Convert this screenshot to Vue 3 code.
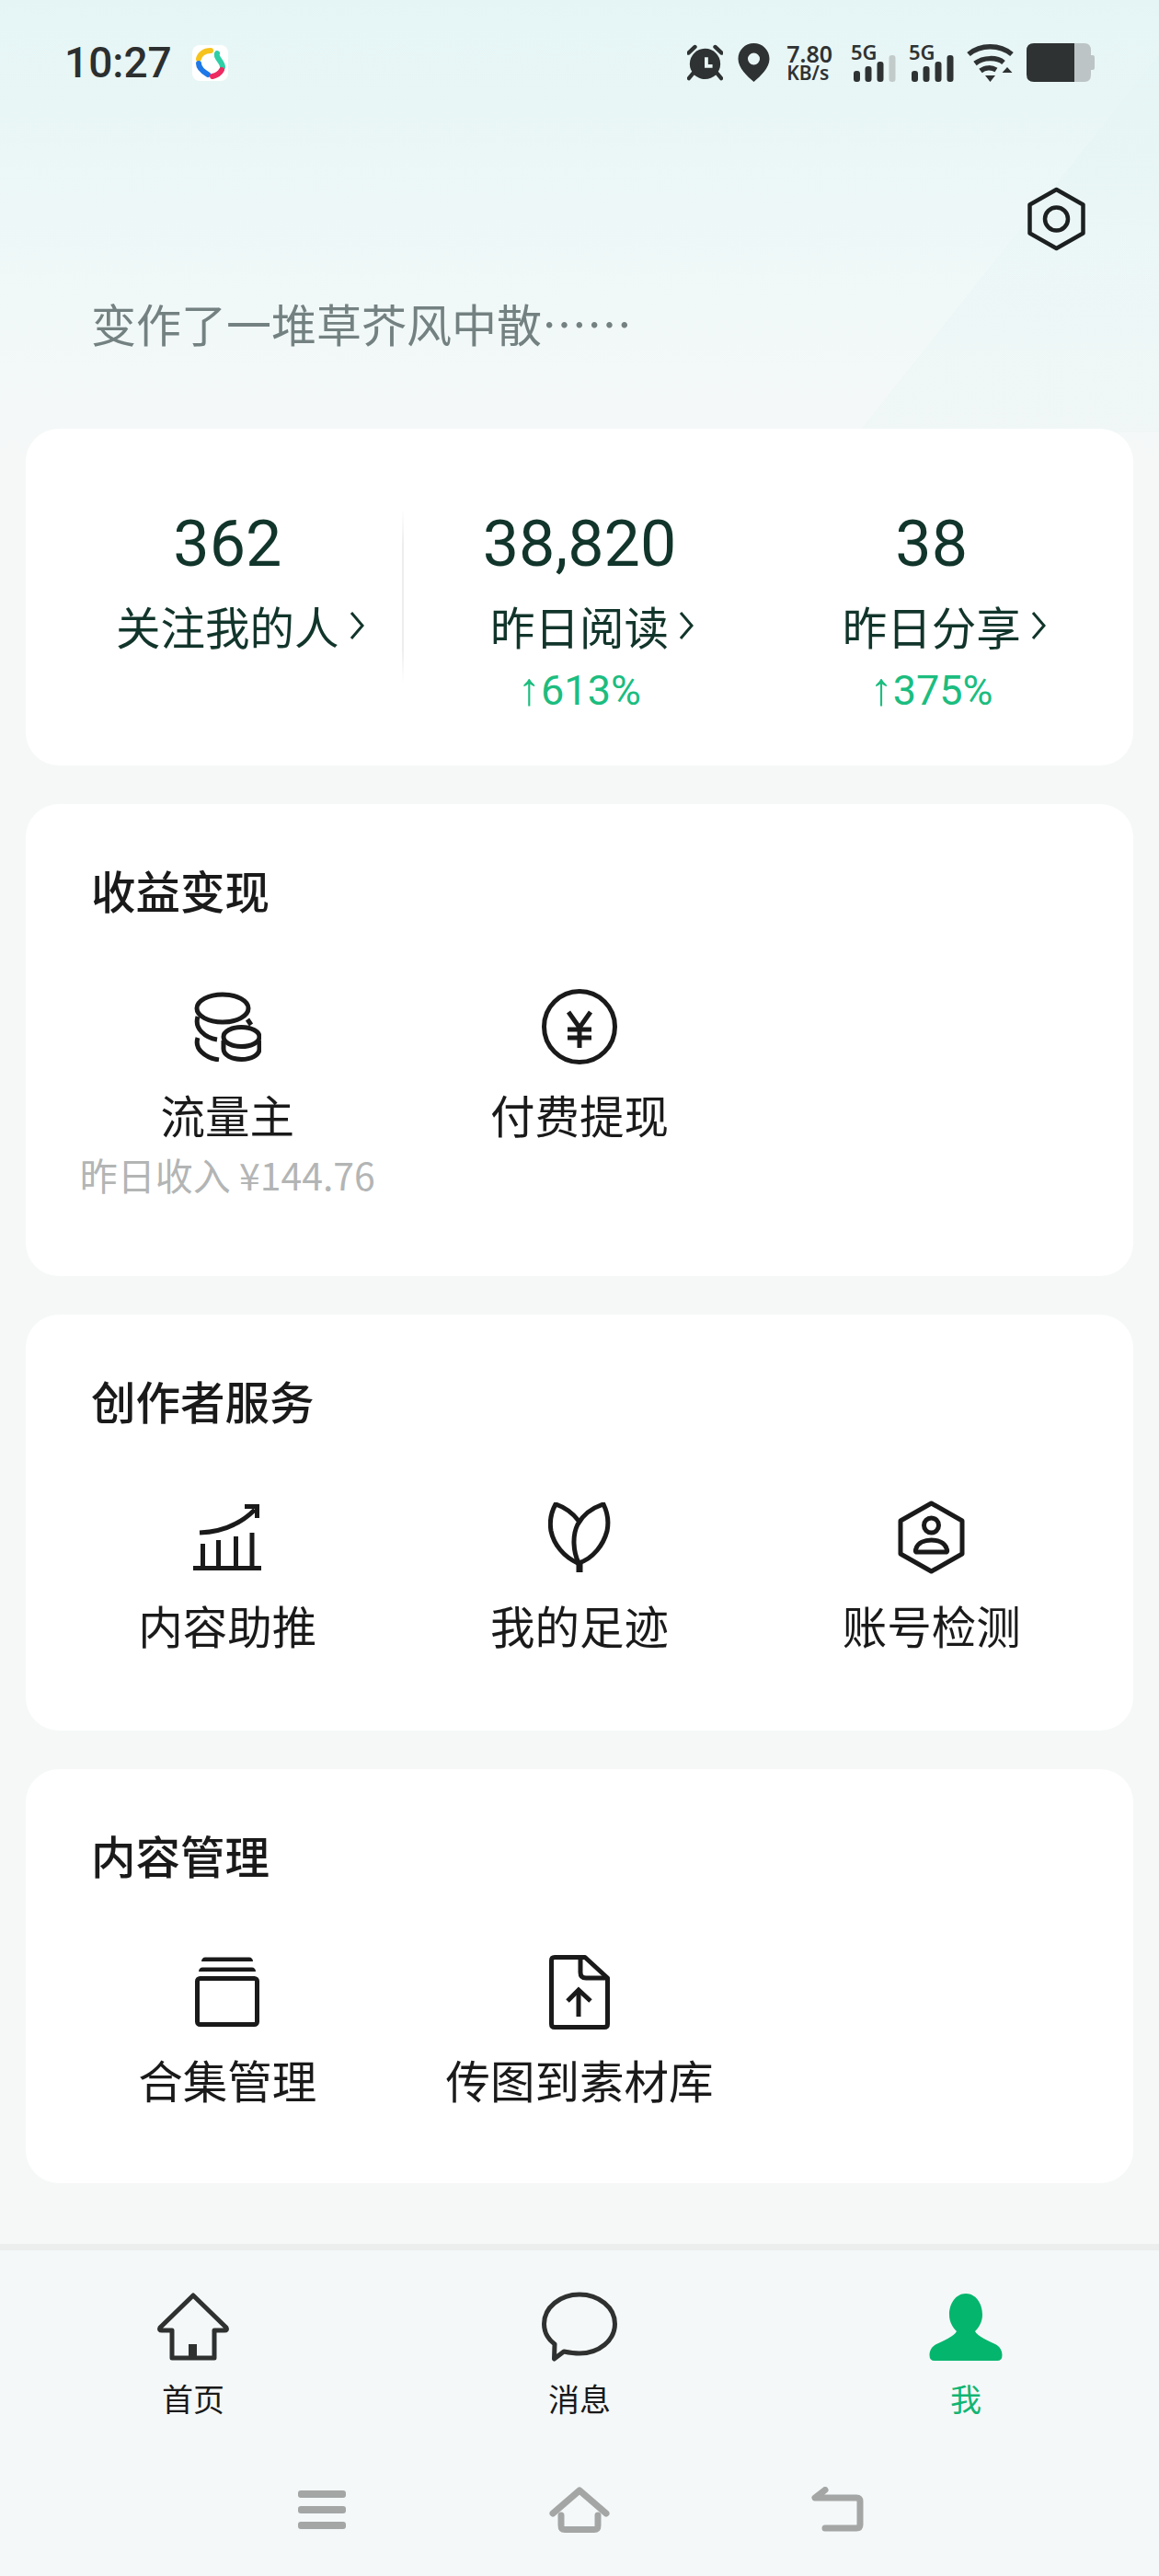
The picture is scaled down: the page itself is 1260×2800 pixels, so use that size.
<template>
  <div class="page">
    <div class="status">
      <div class="status-left">
        <span class="time">10:27</span>
        <svg class="app-logo" width="39" height="39" viewBox="0 0 39 39">
          <rect width="39" height="39" rx="8" fill="#fff" />
          <g fill="none" stroke-width="6" stroke-linecap="round">
            <path d="M20 6 C13 6 8 10 7 15" stroke="#f6c21c" />
            <path d="M27 9 C25 14 33 18 33 24" stroke="#2ecfa6" />
            <path d="M7 20 C7 25 12 29 17 32" stroke="#1e78e8" />
            <path d="M32 27 C30 31 26 33 22 34" stroke="#ee2a62" />
          </g>
        </svg>
      </div>
      <div class="status-right">
        <svg width="39" height="41" viewBox="0 0 41 41">
          <circle cx="20.500" cy="21.500" r="17.500" fill="#2f3232" />
          <path d="M22 14 V24 H29" fill="none" stroke="#eaf6f6" stroke-width="4" />
          <path d="M1.500 9 L9 2 M39.500 9 L32 2 M7 32 L2 38 M34 32 L39 38" stroke="#2f3232" stroke-width="4.500" stroke-linecap="round" />
        </svg>
        <svg class="pin" width="35" height="42" viewBox="0 0 34 42">
          <path fill="#2f3232" fill-rule="evenodd" d="M17 0 C26.500 0 34 7.500 34 17 C34 27 24 36 17 42 C10 36 0 27 0 17 C0 7.500 7.500 0 17 0 Z M17 10.500 A6.500 6.500 0 1 0 17 23.500 A6.500 6.500 0 1 0 17 10.500 Z" />
        </svg>
        <div class="speed">
          <span class="speed-num">7.80</span>
          <span class="speed-unit">KB/s</span>
        </div>
        <div class="signal">
          <span class="signal-tag">5G</span>
          <svg width="49" height="42" viewBox="0 0 49 42">
            <rect x="3" y="30" width="7" height="12" rx="3" fill="#2f3232" />
            <rect x="15.500" y="25" width="7" height="17" rx="3" fill="#2f3232" />
            <rect x="28.500" y="20" width="7" height="22" rx="3" fill="#2f3232" />
            <rect x="41.500" y="13" width="7" height="29" rx="3" fill="#c3caca" />
          </svg>
        </div>
        <div class="signal">
          <span class="signal-tag">5G</span>
          <svg width="49" height="42" viewBox="0 0 49 42">
            <rect x="3" y="30" width="7" height="12" rx="3" fill="#2f3232" />
            <rect x="15.500" y="25" width="7" height="17" rx="3" fill="#2f3232" />
            <rect x="28.500" y="20" width="7" height="22" rx="3" fill="#2f3232" />
            <rect x="41.500" y="13" width="7" height="29" rx="3" fill="#2f3232" />
          </svg>
        </div>
        <svg width="51" height="42" viewBox="0 0 51 42">
          <g fill="none" stroke="#2f3232" stroke-width="5.500">
            <path d="M2 12 C15 1 36 1 49 12" />
            <path d="M9 22 C18 15 33 15 40 21" />
            <path d="M15 30 C20 26 27 26 32 29" />
          </g>
          <path d="M20 35 H31 L25.500 42 Z M44 26 L49.500 32 H38.500 Z" fill="#2f3232" />
        </svg>
        <svg class="battery" width="74" height="42" viewBox="0 0 74 42">
          <path d="M52 0 H8 Q0 0 0 8 V34 Q0 42 8 42 H52 Z" fill="#2f3232" />
          <path d="M52 0 H63 Q70 0 70 8 V34 Q70 42 63 42 H52 Z M70 13 H72 Q74 13 74 15 V27 Q74 29 72 29 H70 Z" fill="#bdc4c5" />
        </svg>
      </div>
    </div>

    <div class="top-action">
      <svg width="63" height="70" viewBox="0 0 63 70">
        <path d="M31.500 3 L60.500 19.500 V50.500 L31.500 67 L2.500 50.500 V19.500 Z" fill="none" stroke="#1c2020" stroke-width="4.500" stroke-linejoin="round" />
        <circle cx="31.500" cy="35" r="12.500" fill="none" stroke="#1c2020" stroke-width="4.500" />
      </svg>
    </div>

    <p class="motto">变作了一堆草芥风中散……</p>

    <section class="card stats">
      <div v-for="(s, i) in stats" :key="s.label" class="stat" :class="{ first: i === 0 }">
        <div class="stat-num">{{ s.num }}</div>
        <div class="stat-label">
          {{ s.label }}
          <svg class="chev" width="18" height="34" viewBox="0 0 18 34">
            <path d="M3 3 L15 17 L3 31" fill="none" stroke="#12352b" stroke-width="3" />
          </svg>
        </div>
        <div v-if="s.rate" class="stat-rate"><span class="arrow">↑</span>{{ s.rate }}</div>
      </div>
    </section>

    <section class="card group income">
      <h2>收益变现</h2>
      <div class="items">
        <div class="item">
          <div class="ico">
            <svg width="73" height="76" viewBox="0 0 73 76" fill="none" stroke="#1a1a1a" stroke-width="5">
              <ellipse cx="31" cy="18" rx="28" ry="15" />
              <path d="M58 30 L62 36" />
              <path d="M4 27 C0 40 12 50 25 52" />
              <path d="M4 50 C0 62 12 72 27 74" />
              <ellipse cx="51.500" cy="49" rx="19.500" ry="10.500" />
              <path d="M32 53 V62 C32 69 41 73.500 51.500 73.500 C62 73.500 71 69 71 62 V53" />
            </svg>
          </div>
          <div class="name">流量主</div>
          <div class="sub">昨日收入 ¥144.76</div>
        </div>
        <div class="item">
          <div class="ico">
            <svg width="82" height="82" viewBox="0 0 82 82" fill="none" stroke="#1a1a1a">
              <circle cx="41" cy="41" r="38.500" stroke-width="5" />
              <path d="M29 25 L41 42 L53 25 M28 44 H54 M28 53 H54 M41 42 V64" stroke-width="5" />
            </svg>
          </div>
          <div class="name">付费提现</div>
        </div>
      </div>
    </section>

    <section class="card group">
      <h2>创作者服务</h2>
      <div class="items">
        <div class="item">
          <div class="ico">
            <svg width="74" height="72" viewBox="0 0 74 72" fill="none" stroke="#1a1a1a" stroke-width="5">
              <path d="M0 69.500 H74" />
              <path d="M10.500 43 V68 M27.500 39 V68 M46.500 35 V68 M64 31 V68" />
              <path d="M7 31 C31 30 51 22 67 6" />
              <path d="M56 2.500 H69.500 V15" />
            </svg>
          </div>
          <div class="name">内容助推</div>
        </div>
        <div class="item">
          <div class="ico">
            <svg width="68" height="76" viewBox="0 0 68 76" fill="none" stroke="#1a1a1a" stroke-width="5">
              <path d="M33 20 C26 11 17 5 8 2 C3 11 1.500 22 3 31 C6 46 17 59 32 66" />
              <path d="M60 2 C48 6 38 13 32 24 C26 36 27 53 33 66 C49 61 60 46 64 31 C66 21 64 10 60 2 Z" />
              <path d="M34 65 V76" stroke-width="7" />
            </svg>
          </div>
          <div class="name">我的足迹</div>
        </div>
        <div class="item">
          <div class="ico">
            <svg width="73" height="80" viewBox="0 0 73 80" fill="none" stroke="#1a1a1a" stroke-width="5" stroke-linejoin="round">
              <path d="M36.500 3 L70 22 V58 L36.500 77 L3 58 V22 Z" />
              <circle cx="36.500" cy="27" r="8" />
              <path d="M21 56 C19 56 19 54 20 52 C22 46 29 43 36.500 43 C44 43 51 46 53 52 C54 54 54 56 52 56 Z" />
            </svg>
          </div>
          <div class="name">账号检测</div>
        </div>
      </div>
    </section>

    <section class="card group last">
      <h2>内容管理</h2>
      <div class="items">
        <div class="item">
          <div class="ico">
            <svg width="70" height="76" viewBox="0 0 70 76" fill="none" stroke="#1a1a1a">
              <path d="M7 5 C7 2 9 .5 11 .5 H59 C61 .5 63 2 63 5 Z" fill="#1a1a1a" stroke="none" />
              <path d="M4 16 C4 13 6 11.500 8 11.500 H62 C64 11.500 66 13 66 16 Z" fill="#1a1a1a" stroke="none" />
              <rect x="2.500" y="23.500" width="65" height="50" rx="3" stroke-width="5" />
            </svg>
          </div>
          <div class="name">合集管理</div>
        </div>
        <div class="item">
          <div class="ico">
            <svg width="66" height="81" viewBox="0 0 66 81" fill="none" stroke="#1a1a1a" stroke-width="5" stroke-linejoin="round">
              <path d="M6 2.500 H39 L63.500 25 V75 Q63.500 78.500 60 78.500 H6 Q2.500 78.500 2.500 75 V6 Q2.500 2.500 6 2.500 Z" />
              <path d="M34 3 V19 Q34 25 40 25 H63" />
              <path d="M32 38 V67" />
              <path d="M20 50 L32 38 L45 50" stroke-linejoin="miter" />
            </svg>
          </div>
          <div class="name">传图到素材库</div>
        </div>
      </div>
    </section>

    <footer class="bottom">
      <nav class="tabs">
        <div class="tab">
          <svg width="78" height="74" viewBox="0 0 78 74" fill="none" stroke="#2f3131" stroke-width="5" stroke-linejoin="round">
            <path d="M39 3 L3 38 Q1.500 41 5 41 H16 V71 H62 V41 H73 Q76.500 41 75 38 Z" />
            <path d="M34 56 H43 V71 H34 Z" fill="#2f3131" stroke="none" />
          </svg>
          <span>首页</span>
        </div>
        <div class="tab">
          <svg width="82" height="76" viewBox="0 0 82 76" fill="none" stroke="#2f3131" stroke-width="5" stroke-linejoin="round">
            <path d="M14 57 C6 51 2.500 43 2.500 35 C2.500 17 20 3 41 3 C62 3 79.500 17 79.500 35 C79.500 53 62 67 41 67 C35 67 29 66 24 65 L13.500 73 Z" />
          </svg>
          <span>消息</span>
        </div>
        <div class="tab active">
          <svg width="80" height="76" viewBox="0 0 80 76">
            <path fill="#04b56d" d="M40 2 C51 2 58 13 58 25 C58 33 54 39 50 43 C52 48 62 52 72 57 C77 59.500 79.500 64 79.500 69 Q79.500 75 74 75 H6 Q.5 75 .5 69 C.5 64 3 59.500 8 57 C18 52 28 48 30 43 C26 39 22 33 22 25 C22 13 29 2 40 2 Z" />
          </svg>
          <span>我</span>
        </div>
      </nav>
      <div class="sys-nav">
        <svg width="52" height="42" viewBox="0 0 52 42">
          <rect width="52" height="8" rx="3" fill="#a4a6a6" />
          <rect y="17" width="52" height="8" rx="3" fill="#a4a6a6" />
          <rect y="34" width="52" height="8" rx="3" fill="#a4a6a6" />
        </svg>
        <svg width="66" height="50" viewBox="0 0 66 50" fill="none" stroke="#a4a6a6" stroke-width="7" stroke-linecap="round" stroke-linejoin="round">
          <path d="M4 29 L33 4 L62 29" />
          <path d="M13 31 V42 Q13 46.500 17 46.500 H49 Q53 46.500 53 42 V31" />
        </svg>
        <svg width="57" height="50" viewBox="0 0 57 50" fill="none" stroke="#a4a6a6" stroke-width="7" stroke-linecap="round" stroke-linejoin="round">
          <path d="M15 3.500 L4 12 H49 Q53 12 53 16 V41 Q53 45 49 45 H15" />
        </svg>
      </div>
    </footer>
  </div>
</template>

<script setup>
const stats = [
  { num: '362', label: '关注我的人' },
  { num: '38,820', label: '昨日阅读', rate: '613%' },
  { num: '38', label: '昨日分享', rate: '375%' },
]
</script>

<style>
html,
body {
  margin: 0;
  background: #f6f8f8;
}
</style>

<style scoped>
.page {
  width: 1260px;
  height: 2800px;
  display: flex;
  flex-direction: column;
  overflow: hidden;
  font-family: "Noto Sans CJK SC", "Noto Sans", sans-serif;
  background:
    linear-gradient(128.5deg, rgba(255, 255, 255, 0) 80%, rgba(222, 241, 241, 0.2) 80%) 0 0 / 1260px 470px no-repeat,
    linear-gradient(180deg, #e5f5f5 0, #f1f8f8 340px, #f6f8f8 500px);
}
.status {
  display: flex;
  justify-content: space-between;
  align-items: center;
  height: 42px;
  margin-top: 47px;
  padding: 0 70px;
}
.status-left {
  display: flex;
  align-items: center;
  gap: 22px;
}
.time {
  font-family: Roboto, sans-serif;
  font-size: 46px;
  font-weight: 500;
  line-height: 42px;
  color: #2c2f2f;
}
.status-right {
  display: flex;
  align-items: center;
  gap: 14px;
  color: #2f3232;
}
.pin {
  margin-left: 2px;
}
.speed {
  display: flex;
  flex-direction: column;
  margin: 0 6px 0 4px;
  font-family: "Noto Sans", sans-serif;
  font-weight: 600;
}
.speed-num {
  font-size: 25px;
  line-height: 23px;
}
.speed-unit {
  font-size: 21px;
  line-height: 19px;
}
.signal {
  position: relative;
  width: 49px;
  height: 42px;
}
.signal svg {
  display: block;
}
.signal-tag {
  position: absolute;
  left: 0;
  top: -2px;
  font-family: "Noto Sans", sans-serif;
  font-size: 22px;
  font-weight: 600;
  line-height: 22px;
}
.top-action {
  display: flex;
  justify-content: flex-end;
  margin-top: 114px;
  padding-right: 80px;
}
.motto {
  margin: 46px 0 0 99px;
  font-size: 49px;
  line-height: 64px;
  color: #748181;
}
.card {
  margin: 0 28px;
  border-radius: 36px;
  background: #fff;
}
.stats {
  display: grid;
  grid-template-columns: repeat(3, 1fr);
  margin-top: 83px;
  padding: 88px 28px 53px;
}
.stat {
  position: relative;
  text-align: center;
  color: #12352b;
}
.stat.first::after {
  content: "";
  position: absolute;
  top: -1px;
  right: 0;
  width: 2px;
  height: 190px;
  background: linear-gradient(180deg, #fff, #eceeee 20%, #eceeee 80%, #fff);
}
.stat-num {
  font-family: Roboto, sans-serif;
  font-size: 70px;
  line-height: 74px;
}
.stat-label {
  position: relative;
  width: max-content;
  margin: 20px auto 0;
  font-size: 48.500px;
  line-height: 64px;
}
.chev {
  position: absolute;
  left: 100%;
  top: 15px;
  margin-left: 10px;
}
.stat-rate {
  margin-top: 11px;
  font-family: Roboto, sans-serif;
  font-size: 45px;
  line-height: 56px;
  color: #1cbd7f;
}
.arrow {
  font-family: "Liberation Sans", sans-serif;
  font-size: 50px;
  line-height: 0;
}
.group {
  margin-top: 42px;
  padding: 61px 28px 83px;
}
.income {
  padding-bottom: 86px;
}
.last {
  padding-bottom: 81px;
}
.group h2 {
  margin: 0 0 0 43px;
  font-size: 48.500px;
  font-weight: 500;
  line-height: 64px;
  color: #1a1a1a;
}
.items {
  display: grid;
  grid-template-columns: repeat(3, 1fr);
  margin-top: 77px;
}
.item {
  display: flex;
  flex-direction: column;
  align-items: center;
}
.ico {
  display: flex;
  align-items: center;
  justify-content: center;
  height: 80px;
}
.name {
  margin-top: 23px;
  font-size: 48.500px;
  line-height: 64px;
  color: #1a1a1a;
}
.sub {
  margin-top: 8px;
  font-size: 41px;
  line-height: 50px;
  color: #b3b5b5;
  white-space: nowrap;
}
.bottom {
  flex: 1;
  margin-top: 66px;
  border-top: 7px solid #eceeee;
  background: #f5f8f8;
}
.tabs {
  display: grid;
  grid-template-columns: repeat(3, 420px);
  padding-top: 43px;
}
.tab {
  display: flex;
  flex-direction: column;
  align-items: center;
  font-size: 34px;
  line-height: 48px;
  color: #1a1a1a;
}
.tab svg {
  height: 80px;
}
.tab span {
  margin-top: 14px;
}
.tab.active {
  color: #12b573;
}
.sys-nav {
  display: grid;
  grid-template-columns: repeat(3, 280px);
  justify-content: center;
  justify-items: center;
  align-items: center;
  height: 50px;
  margin-top: 72px;
}
</style>
